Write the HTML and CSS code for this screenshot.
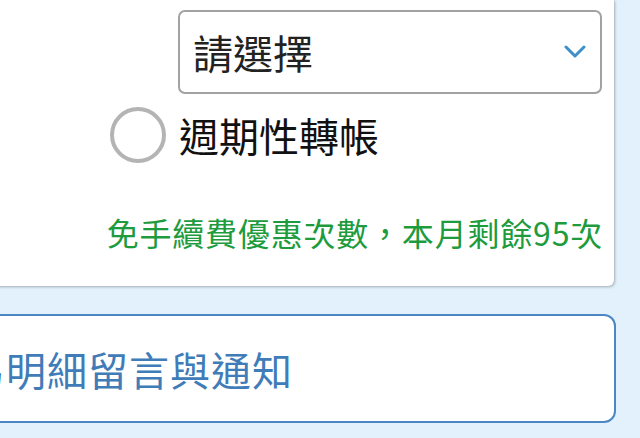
FILE: index.html
```html
<!DOCTYPE html>
<html lang="zh-Hant">
<head>
<meta charset="utf-8">
<link rel="stylesheet" href="styles.css">
</head>
<body>
<div class="page">
  <section class="card">
    <div class="select-row">
      <div class="select">
        <span class="select-text">請選擇</span>
        <svg class="chevron" width="22" height="14" viewBox="0 0 22 14"><path d="M2 2 L11 11 L20 2" fill="none" stroke="#3d8fcc" stroke-width="3" stroke-linecap="round" stroke-linejoin="round"/></svg>
      </div>
    </div>
    <div class="radio-row">
      <span class="radio"></span>
      <span class="radio-label">週期性轉帳</span>
    </div>
    <p class="promo">免手續費優惠次數，本月剩餘95次</p>
  </section>
  <div class="notice">
    <span class="notice-text">交易明細留言與通知</span>
  </div>
</div>
</body>
</html>
```

FILE: styles.css
```css
html, body {
  margin: 0;
  padding: 0;
}
body {
  width: 640px;
  height: 438px;
  overflow: hidden;
  background: #e2f1fc;
  font-family: "Noto Sans CJK TC", "Noto Sans", sans-serif;
}
.page {
  display: flex;
  flex-direction: column;
}
.card {
  margin-left: -20px;
  width: 634px;
  height: 286px;
  box-sizing: border-box;
  background: #ffffff;
  border-radius: 0 0 6px 0;
  box-shadow: 1px 1px 3px rgba(0, 0, 0, 0.28);
  padding: 10px 12px 0 0;
  display: flex;
  flex-direction: column;
}
.select-row {
  display: flex;
  justify-content: flex-end;
}
.select {
  width: 424px;
  height: 84px;
  box-sizing: border-box;
  border: 2px solid #a2a2a2;
  border-radius: 7px;
  display: flex;
  align-items: center;
  justify-content: space-between;
  padding: 0 14px 0 13px;
}
.select-text {
  font-size: 40px;
  line-height: 48px;
  color: #222222;
}
.chevron {
  display: block;
}
.radio-row {
  margin-top: 13px;
  margin-left: 130px;
  display: flex;
  align-items: center;
  gap: 13px;
}
.radio {
  width: 56px;
  height: 56px;
  box-sizing: border-box;
  border: 4px solid #b4b4b4;
  border-radius: 50%;
}
.radio-label {
  font-size: 40px;
  line-height: 48px;
  color: #111111;
}
.promo {
  margin: 49px 0 0 0;
  text-align: right;
  font-size: 32px;
  line-height: 40px;
  letter-spacing: 0.8px;
  margin-right: -1px;
  color: #1d9b3d;
}
.notice {
  margin-top: 28px;
  margin-left: -110px;
  width: 726px;
  height: 109px;
  box-sizing: border-box;
  border: 2px solid #4a87c3;
  border-radius: 12px;
  background: #ffffff;
  display: flex;
  align-items: center;
  padding-left: 32px;
}
.notice-text {
  font-size: 40px;
  line-height: 48px;
  letter-spacing: 1px;
  color: #3f7cb8;
}
```
